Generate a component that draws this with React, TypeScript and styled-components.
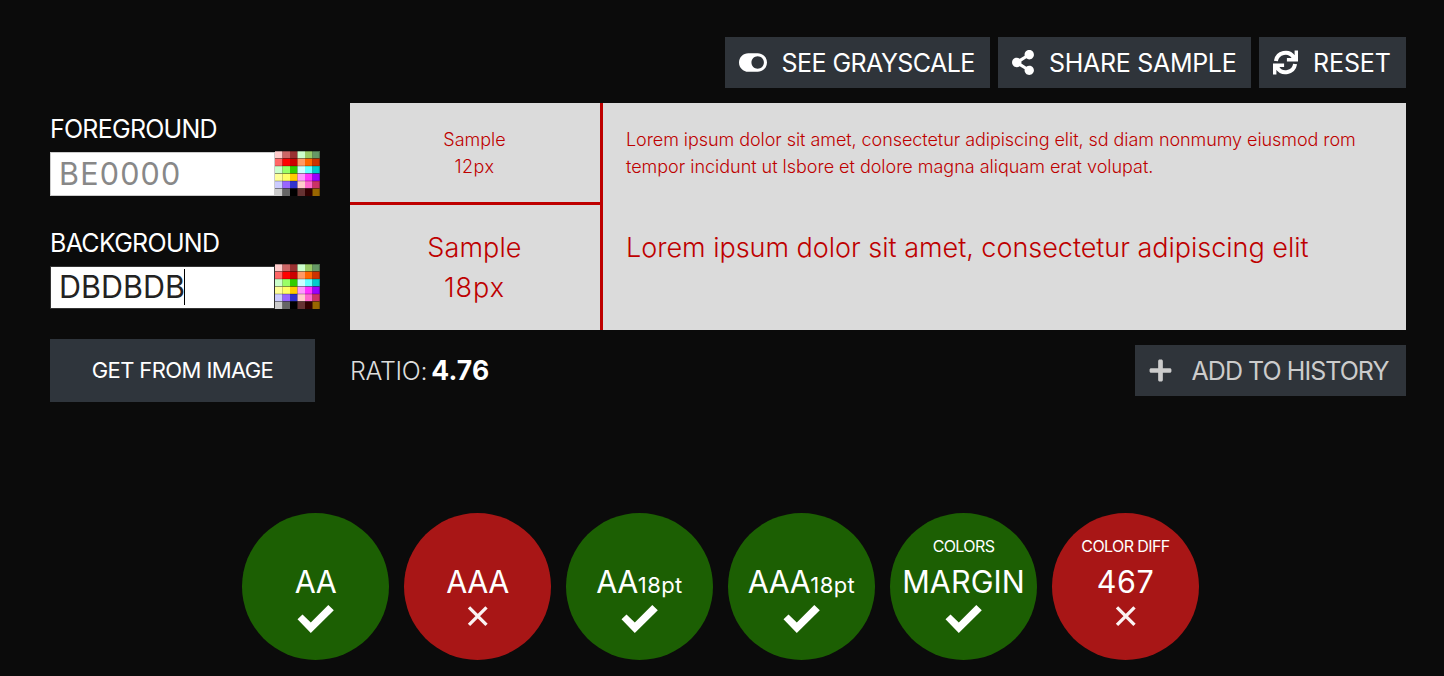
import React from 'react';
import styled, { createGlobalStyle } from 'styled-components';
import { FaPlus, FaShareAlt, FaToggleOn } from 'react-icons/fa';

const Global = createGlobalStyle`
  *, *::before, *::after { box-sizing: border-box; }
  body { margin: 0; background: #0b0b0b; color: #fff; font-family: Inter, 'Liberation Sans', sans-serif; }
  p { margin: 0; }
`;

const Page = styled.main`
  height: 676px;
  padding: 37px 38px 0 50px;
  overflow: hidden;
`;

const Toolbar = styled.div`
  display: flex;
  justify-content: flex-end;
  gap: 8px;
  height: 51px;
`;

const Tracked = styled.span<{ $track: number }>`
  letter-spacing: ${p => p.$track}px;
  white-space: nowrap;
`;

const Button = styled.button<{ $width: number; $gap: number; $muted?: boolean }>`
  display: flex;
  align-items: center;
  gap: ${p => p.$gap}px;
  width: ${p => p.$width}px;
  height: 51px;
  padding: 0 0 0 14px;
  border: 0;
  background: #2f343a;
  color: ${p => (p.$muted ? '#ccc' : '#fff')};
  font: 400 25px/50px Inter, sans-serif;
  svg { flex: none; }
`;

const Workspace = styled.div`
  display: grid;
  grid-template-columns: 270px 1056px;
  column-gap: 30px;
  margin-top: 15px;
`;

const Form = styled.form`
  display: flex;
  flex-direction: column;
`;

const Field = styled.div`
  display: flex;
  flex-direction: column;
  height: 114px;
  padding-top: 11px;
`;

const Label = styled.label`
  height: 38px;
  font-size: 25px;
  line-height: 31px;
`;

const Entry = styled.div`
  display: flex;
  align-items: flex-start;
`;

const HexBox = styled.div<{ $focused?: boolean }>`
  display: flex;
  align-items: center;
  width: 225px;
  height: ${p => (p.$focused ? 43 : 44)}px;
  padding: 0 0 2px 8px;
  border: 1px solid ${p => (p.$focused ? '#333' : '#ccc')};
  background: #fff;
  color: ${p => (p.$focused ? '#222' : '#888')};
  font-size: 30.5px;
  font-weight: 400;
`;

const Caret = styled.i`
  width: 1px;
  height: 36px;
  margin-left: -1px;
  background: #000;
`;

const Palette = styled.svg<{ $lift: number }>`
  display: block;
  width: 45px;
  height: 45px;
  margin-top: -${p => p.$lift}px;
`;

const ImageButton = styled.button`
  width: 265px;
  height: 63px;
  margin-top: 8px;
  padding: 0 0 1px;
  border: 0;
  background: #2f353c;
  color: #fff;
  font: 400 22px/60px Inter, sans-serif;
`;

const Preview = styled.section`
  display: grid;
  grid-template-columns: 253px 1fr;
  grid-template-rows: 102px 125px;
  background: #dbdbdb;
  color: #be0000;
  font-weight: 300;
`;

const SampleName = styled.div<{ $large?: boolean }>`
  padding: 23px 1px 0 0;
  border-right: 3px solid #be0000;
  border-bottom: ${p => (p.$large ? '0' : '3px solid #be0000')};
  font-size: ${p => (p.$large ? 27 : 18)}px;
  line-height: ${p => (p.$large ? 40 : 27)}px;
  text-align: center;
`;

const SampleText = styled.div<{ $large?: boolean }>`
  padding: 23px 0 0 23px;
  font-size: ${p => (p.$large ? 27 : 18)}px;
  line-height: ${p => (p.$large ? 40 : 27)}px;
`;

const Footer = styled.div`
  display: flex;
  justify-content: space-between;
  margin-top: 15px;
`;

const Ratio = styled.div`
  color: #ddd;
  font-size: 25px;
  font-weight: 300;
  line-height: 51px;
  strong { color: #fff; font-size: 26.5px; font-weight: 700; margin-left: 4px; }
`;

const Results = styled.div`
  display: flex;
  gap: 15px;
  margin: 111px 0 0 192px;
`;

const Badge = styled.div<{ $pass: boolean }>`
  display: flex;
  flex-direction: column;
  align-items: center;
  width: 147px;
  height: 147px;
  border-radius: 50%;
  background: ${p => (p.$pass ? '#1c5f03' : '#a81616')};
`;

const Caption = styled.div`
  height: 49px;
  padding-top: 23px;
  font-size: 16px;
  line-height: 21px;
`;

const Grade = styled.div`
  height: 40px;
  font-size: 30.5px;
  line-height: 40px;
  white-space: nowrap;
  small { font-size: 22px; letter-spacing: 0.4px; }
`;

const Mark = styled.svg`
  display: block;
  width: 40px;
  height: 32px;
`;

const swatches = [
  ['#ffcccc', '#cc6666', '#993333', '#ccffcc', '#99cc66', '#669966'],
  ['#ff6666', '#ff0000', '#cc0000', '#ff9966', '#ff6600', '#cc3300'],
  ['#ccffcc', '#99ff66', '#33cc00', '#ccffff', '#66ffff', '#00cccc'],
  ['#ffff99', '#ffff66', '#ffcc00', '#ff99ff', '#ff33ff', '#9900ff'],
  ['#ccccff', '#9966ff', '#3333cc', '#ffcccc', '#ff66cc', '#cc3366'],
  ['#cccccc', '#666666', '#000000', '#663333', '#330000', '#996600'],
];

const ColorPicker = ({ lift }: { lift: number }) => (
  <Palette $lift={lift} viewBox="0 0 45 45">
    <defs>
      <filter id="soft" x="0" y="0" width="100%" height="100%">
        <feGaussianBlur stdDeviation=".75" edgeMode="duplicate" />
      </filter>
    </defs>
    <g filter="url(#soft)">
      {swatches.map((row, y) =>
        row.map((fill, x) => <rect key={`${x}-${y}`} x={x * 7.5} y={y * 7.5} width="7.6" height="7.6" fill={fill} />),
      )}
      <path
        d="M0 .5H45M0 7.5H45M0 15H45M0 22.5H45M0 30H45M0 37.5H45M44.5 0V45"
        stroke="#000"
        strokeOpacity=".28"
        strokeWidth="1.2"
      />
    </g>
  </Palette>
);

const RefreshIcon = () => (
  <svg width="25" height="25" viewBox="0 0 25 25">
    <g id="arrow">
      <path d="M2.9 11A9.7 9.7 0 0 1 20.6 7.2" fill="none" stroke="#fff" strokeWidth="4" />
      <path d="M21.6 .5H25V11.4H13.9V8H18.2L21.6 4.8Z" fill="#fff" />
    </g>
    <use href="#arrow" transform="rotate(180 12.5 12.5)" />
  </svg>
);

const StatusMark = ({ pass }: { pass: boolean }) => (
  <Mark viewBox="0 0 40 32">
    {pass ? (
      <path d="M1.5 17.3L6.5 12.5L14.8 20.5L32.3 3L37.8 8.3L14.8 30.9Z" fill="#fff" />
    ) : (
      <path d="M11 5.3L28.5 22.8M28.5 5.3L11 22.8" fill="none" stroke="#fff" strokeOpacity=".95" strokeWidth="3.3" />
    )}
  </Mark>
);

type Result = { grade: string; pass: boolean; track: number; size?: string; caption?: string; captionTrack?: number };

const results: Result[] = [
  { grade: 'AA', pass: true, track: -0.6 },
  { grade: 'AAA', pass: false, track: -0.5 },
  { grade: 'AA', pass: true, track: -0.5, size: '18pt' },
  { grade: 'AAA', pass: true, track: -0.5, size: '18pt' },
  { grade: 'MARGIN', pass: true, track: 0.1, caption: 'COLORS', captionTrack: -0.6 },
  { grade: '467', pass: false, track: 0.6, caption: 'COLOR DIFF', captionTrack: -0.6 },
];

export default function App() {
  return (
    <Page>
      <Global />
      <Toolbar>
        <Button $width={265} $gap={14.5}>
          <FaToggleOn style={{ width: 28, height: 25 }} />
          <Tracked $track={-0.55}>SEE GRAYSCALE</Tracked>
        </Button>
        <Button $width={253} $gap={15}>
          <FaShareAlt style={{ width: 22, height: 25 }} />
          <Tracked $track={-0.3}>SHARE SAMPLE</Tracked>
        </Button>
        <Button $width={147} $gap={15}>
          <RefreshIcon />
          <Tracked $track={-0.1}>RESET</Tracked>
        </Button>
      </Toolbar>
      <Workspace>
        <Form>
          <Field>
            <Label><Tracked $track={-0.75}>FOREGROUND</Tracked></Label>
            <Entry>
              <HexBox><Tracked $track={1.2}>BE0000</Tracked></HexBox>
              <ColorPicker lift={1} />
            </Entry>
          </Field>
          <Field>
            <Label><Tracked $track={-0.7}>BACKGROUND</Tracked></Label>
            <Entry>
              <HexBox $focused><Tracked $track={0}>DBDBDB</Tracked><Caret /></HexBox>
              <ColorPicker lift={2} />
            </Entry>
          </Field>
          <ImageButton type="button"><Tracked $track={-0.6}>GET FROM IMAGE</Tracked></ImageButton>
        </Form>
        <div>
          <Preview>
            <SampleName><p>Sample</p><p><Tracked $track={0.5}>12px</Tracked></p></SampleName>
            <SampleText>
              <p><Tracked $track={-0.06}>Lorem ipsum dolor sit amet, consectetur adipiscing elit, sd diam nonmumy eiusmod rom</Tracked></p>
              <p><Tracked $track={-0.02}>tempor incidunt ut lsbore et dolore magna aliquam erat volupat.</Tracked></p>
            </SampleText>
            <SampleName $large><p><Tracked $track={0.1}>Sample</Tracked></p><p><Tracked $track={1}>18px</Tracked></p></SampleName>
            <SampleText $large>
              <p><Tracked $track={-0.02}>Lorem ipsum dolor sit amet, consectetur adipiscing elit</Tracked></p>
            </SampleText>
          </Preview>
          <Footer>
            <Ratio><Tracked $track={-0.3}>RATIO:</Tracked><strong><Tracked $track={0.2}>4.76</Tracked></strong></Ratio>
            <Button $width={271} $gap={19.5} $muted>
              <FaPlus style={{ width: 23, height: 25 }} />
              <Tracked $track={-0.95}>ADD TO HISTORY</Tracked>
            </Button>
          </Footer>
        </div>
      </Workspace>
      <Results>
        {results.map((r, i) => (
          <Badge key={i} $pass={r.pass}>
            <Caption>{r.caption && <Tracked $track={r.captionTrack ?? 0}>{r.caption}</Tracked>}</Caption>
            <Grade><Tracked $track={r.track}>{r.grade}</Tracked>{r.size && <small>{r.size}</small>}</Grade>
            <StatusMark pass={r.pass} />
          </Badge>
        ))}
      </Results>
    </Page>
  );
}
